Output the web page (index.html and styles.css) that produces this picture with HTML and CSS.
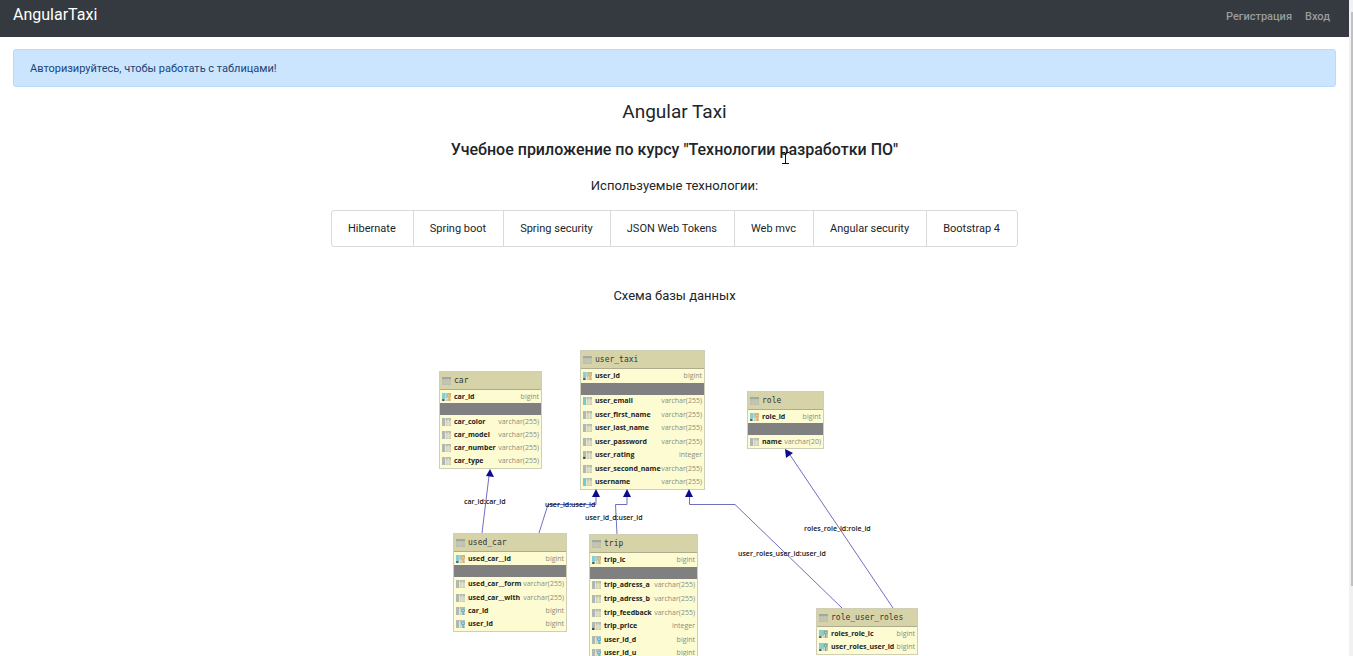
FILE: index.html
```html
<!DOCTYPE html>
<html lang="ru">
<head>
<meta charset="utf-8">
<title>AngularTaxi</title>
<link rel="stylesheet" href="styles.css">
</head>
<body>
<svg class="defs" aria-hidden="true">
  <symbol id="i-table" viewBox="0 0 9 8"><rect x="0" y="0" width="9" height="8" fill="#b9bdb0"/><rect x="0" y="0" width="9" height="2" fill="#a0a8a6"/><path d="M0 4H9M0 6H9M3 2V8M6 2V8" stroke="#d0d0b4" stroke-width=".6"/></symbol>
  <symbol id="i-col" viewBox="0 0 9 8"><rect width="3" height="8" fill="#b1b7b5"/><rect x="3.6" width="5.4" height="8" fill="#c9cbb9"/><path d="M3.6 1H9" stroke="#b1b7b5" stroke-width="1.6"/><path d="M3.6 4H9M3.6 6H9M6.2 1V8" stroke="#ececc8" stroke-width=".8"/></symbol>
  <symbol id="i-uniq" viewBox="0 0 9 8"><use href="#i-col"/><rect width="3" height="8" fill="#6fcbd8"/></symbol>
  <symbol id="i-dot" viewBox="0 0 9 8"><use href="#i-col"/><circle cx="1.2" cy="7" r="1.2" fill="#3f4a4a"/></symbol>
  <symbol id="i-pk" viewBox="0 0 9 8"><use href="#i-col"/><rect width="3" height="6" fill="#8accd4"/><rect x="3.4" width="2" height="5" fill="#9fd0d0"/><circle cx="1.2" cy="7" r="1.1" fill="#3f5a5a"/><circle cx="7" cy="2.6" r="1.4" fill="#f4dca0" stroke="#e0a850" stroke-width="1.1"/><path d="M7 4V8M7 6.8H8.4" stroke="#e0a850" stroke-width="1.1"/></symbol>
  <symbol id="i-fk" viewBox="0 0 9 8"><use href="#i-col"/><circle cx="7" cy="3.4" r="1.4" fill="#c8e8ec" stroke="#45b1d0" stroke-width="1.1"/><path d="M7 4.6V8M7 7H8.4" stroke="#45b1d0" stroke-width="1.1"/></symbol>
  <symbol id="i-pfk" viewBox="0 0 9 8"><use href="#i-col"/><rect width="5" height="6" fill="#8accd4"/><circle cx="1.2" cy="7" r="1.1" fill="#3f5a5a"/><circle cx="6.6" cy="2.6" r="1.4" fill="#b8d8c8" stroke="#6aa698" stroke-width="1.1"/><path d="M6.6 4V8" stroke="#6aa698" stroke-width="1.1"/><path d="M8.2 3V7" stroke="#d8b060" stroke-width=".8"/></symbol>
</svg>
<div class="shell">
  <div class="page">
    <nav class="navbar">
      <a class="brand" href="#">AngularTaxi</a>
      <div class="nav-links"><a href="#">Регистрация</a><a href="#">Вход</a></div>
    </nav>
    <div class="alert" role="alert">Авторизируйтесь, чтобы работать с таблицами!</div>
    <main class="content">
      <h1>Angular Taxi</h1>
      <h2>Учебное приложение по курсу "Технологии <span class="pointed">разработки<svg class="cursor" viewBox="0 0 7 12" aria-hidden="true"><path d="M0 .5H3M4 .5H7M3.5 1V11M0 11.5H7" fill="none" stroke="#111"/></svg></span> ПО"</h2>
      <p>Используемые технологии:</p>
      <ul class="tech">
        <li>Hibernate</li><li>Spring boot</li><li>Spring security</li><li>JSON Web Tokens</li><li>Web mvc</li><li>Angular security</li><li>Bootstrap 4</li>
      </ul>
      <p class="caption">Схема базы данных</p>
      <div class="diagram">
        <section class="node car">
          <h3><svg><use href="#i-table"/></svg>car</h3>
          <div class="row"><svg><use href="#i-pk"/></svg><b>car_id</b><i>bigint</i></div>
          <div class="band"></div>
          <div class="row"><svg><use href="#i-col"/></svg><b>car_color</b><i>varchar(255)</i></div>
          <div class="row"><svg><use href="#i-col"/></svg><b>car_model</b><i>varchar(255)</i></div>
          <div class="row"><svg><use href="#i-col"/></svg><b>car_number</b><i>varchar(255)</i></div>
          <div class="row"><svg><use href="#i-col"/></svg><b>car_type</b><i>varchar(255)</i></div>
        </section>
        <section class="node user-taxi">
          <h3><svg><use href="#i-table"/></svg>user_taxi</h3>
          <div class="row"><svg><use href="#i-pk"/></svg><b>user_id</b><i>bigint</i></div>
          <div class="band"></div>
          <div class="row"><svg><use href="#i-uniq"/></svg><b>user_email</b><i>varchar(255)</i></div>
          <div class="row"><svg><use href="#i-col"/></svg><b>user_first_name</b><i>varchar(255)</i></div>
          <div class="row"><svg><use href="#i-col"/></svg><b>user_last_name</b><i>varchar(255)</i></div>
          <div class="row"><svg><use href="#i-col"/></svg><b>user_password</b><i>varchar(255)</i></div>
          <div class="row"><svg><use href="#i-dot"/></svg><b>user_rating</b><i>integer</i></div>
          <div class="row"><svg><use href="#i-col"/></svg><b>user_second_name</b><i>varchar(255)</i></div>
          <div class="row"><svg><use href="#i-uniq"/></svg><b>username</b><i>varchar(255)</i></div>
        </section>
        <section class="node role">
          <h3><svg><use href="#i-table"/></svg>role</h3>
          <div class="row"><svg><use href="#i-pk"/></svg><b>role_id</b><i>bigint</i></div>
          <div class="band"></div>
          <div class="row"><svg><use href="#i-col"/></svg><b>name</b><i>varchar(20)</i></div>
        </section>
        <section class="node used-car">
          <h3><svg><use href="#i-table"/></svg>used_car</h3>
          <div class="row"><svg><use href="#i-pk"/></svg><b>used_car__id</b><i>bigint</i></div>
          <div class="band"></div>
          <div class="row"><svg><use href="#i-col"/></svg><b>used_car__form</b><i>varchar(255)</i></div>
          <div class="row"><svg><use href="#i-col"/></svg><b>used_car__with</b><i>varchar(255)</i></div>
          <div class="row"><svg><use href="#i-fk"/></svg><b>car_id</b><i>bigint</i></div>
          <div class="row"><svg><use href="#i-fk"/></svg><b>user_id</b><i>bigint</i></div>
        </section>
        <section class="node trip">
          <h3><svg><use href="#i-table"/></svg>trip</h3>
          <div class="row"><svg><use href="#i-pk"/></svg><b>trip_ic</b><i>bigint</i></div>
          <div class="band"></div>
          <div class="row"><svg><use href="#i-col"/></svg><b>trip_adress_a</b><i>varchar(255)</i></div>
          <div class="row"><svg><use href="#i-col"/></svg><b>trip_adress_b</b><i>varchar(255)</i></div>
          <div class="row"><svg><use href="#i-col"/></svg><b>trip_feedback</b><i>varchar(255)</i></div>
          <div class="row"><svg><use href="#i-dot"/></svg><b>trip_price</b><i>integer</i></div>
          <div class="row"><svg><use href="#i-fk"/></svg><b>user_id_d</b><i>bigint</i></div>
          <div class="row"><svg><use href="#i-fk"/></svg><b>user_id_u</b><i>bigint</i></div>
        </section>
        <section class="node role-user-roles">
          <h3><svg><use href="#i-table"/></svg>role_user_roles</h3>
          <div class="row"><svg><use href="#i-pfk"/></svg><b>roles_role_ic</b><i>bigint</i></div>
          <div class="row"><svg><use href="#i-pfk"/></svg><b>user_roles_user_id</b><i>bigint</i></div>
        </section>
        <svg class="edges" viewBox="0 0 501 340">
          <g fill="none" stroke="#6f6fc0">
            <path d="M58 193L65 136"/>
            <path d="M115 193L124 164.500H172V156"/>
            <path d="M193 194L191.500 164.500H203V156"/>
            <path d="M418 268L311 164.500H265.500V156"/>
            <path d="M469 268L366 115"/>
          </g>
          <g fill="#0b0b8c">
            <path d="M66 129L70 137L62 136Z"/>
            <path d="M172 149L176 157H168Z"/>
            <path d="M203 149L207 157H199Z"/>
            <path d="M265 149L269 157H261Z"/>
            <path d="M361 109L369 113L362 118Z"/>
          </g>
          <g class="edge-labels">
            <text x="40" y="164">car_id:car_id</text>
            <text x="121" y="167">user_id:user_id</text>
            <text x="161" y="180">user_id_d:user_id</text>
            <text x="314" y="216">user_roles_user_id:user_id</text>
            <text x="380" y="191">roles_role_id:role_id</text>
          </g>
        </svg>
      </div>
    </main>
  </div>
  <div class="scrollbar" aria-hidden="true"><div class="thumb"></div></div>
</div>
</body>
</html>
```
FILE: styles.css
```css
* { box-sizing: border-box; }
body { margin: 0; font: 11px/16px Roboto, sans-serif; color: #212529; background: #fff; }
.defs { position: absolute; width: 0; height: 0; }
.shell { display: flex; height: 100vh; }
.page { flex: 1; overflow-y: auto; scrollbar-width: none; }
.scrollbar { width: 4px; background: #f1f1f1; padding: 12px 0 70px 2px; }
.thumb { height: 100%; background: #c1c1c1; }

.navbar { display: flex; justify-content: space-between; align-items: baseline; height: 37px; padding: 7px 19px 0 13px; background: #343a40; }
.navbar a { text-decoration: none; }
.brand { font-size: 16px; font-weight: 400; color: #fff; }
.nav-links { display: flex; gap: 13px; font-weight: 500; }
.nav-links a { color: #999c9f; }

.alert { margin: 12px 13px 0; padding: 11px 16px 9px; color: #1b4477; background: #cce5ff; border: 1px solid #b8daff; border-radius: 3px; }

.content { display: flex; flex-direction: column; align-items: center; padding: 13px 0 0; }
h1 { margin: 0; font-size: 19px; line-height: 24px; font-weight: 400; }
h2 { margin: 16px 0; font-size: 16px; line-height: 20px; font-weight: 500; }
p { margin: 0; font-size: 13px; line-height: 20px; }
.pointed { position: relative; }
.cursor { position: absolute; left: 3px; top: 12px; width: 7px; height: 12px; }
.tech { display: flex; margin: 14px 0 39px; padding: 0; list-style: none; border: 1px solid #d9dadb; border-radius: 3px; }
.tech li { padding: 10px 17px 9px 16px; }
.tech li + li { border-left: 1px solid #d9dadb; }
.caption { margin-bottom: 34px; }

.diagram { position: relative; width: 501px; height: 340px; }
.node { position: absolute; display: flex; flex-direction: column; background: #fdfbd2; border: 1px solid #cfcfb8; }
.node svg { flex: none; width: 9px; height: 8px; margin-right: 3px; }
.node h3 { display: flex; align-items: center; flex: none; height: 18px; margin: 0; padding-left: 2px; background: #d6d3a8; border-bottom: 1px solid #aeac8c; font: 8px/16px "DejaVu Sans Mono", monospace; color: #333; }
.row { display: flex; align-items: center; flex: 1; min-height: 0; padding: 0 2px; font: 7px/12px "Open Sans", sans-serif; white-space: nowrap; }
.row b { font-weight: 700; color: #222; }
.row i { margin-left: auto; font-style: normal; color: #8c8c80; }
.band { flex: none; height: 12px; background: #808080; }
.car { left: 15px; top: 31px; width: 103px; height: 98px; }
.user-taxi { left: 156px; top: 10px; width: 125px; height: 140px; }
.role { left: 323px; top: 51px; width: 77px; height: 58px; }
.used-car { left: 29px; top: 193px; width: 114px; height: 99px; }
.trip { left: 165px; top: 194px; width: 109px; height: 127px; }
.role-user-roles { left: 392px; top: 268px; width: 102px; height: 47px; }
.edges { position: absolute; inset: 0; width: 501px; height: 340px; }
.edge-labels { font: 600 7px "Open Sans", sans-serif; fill: #111; }
```
